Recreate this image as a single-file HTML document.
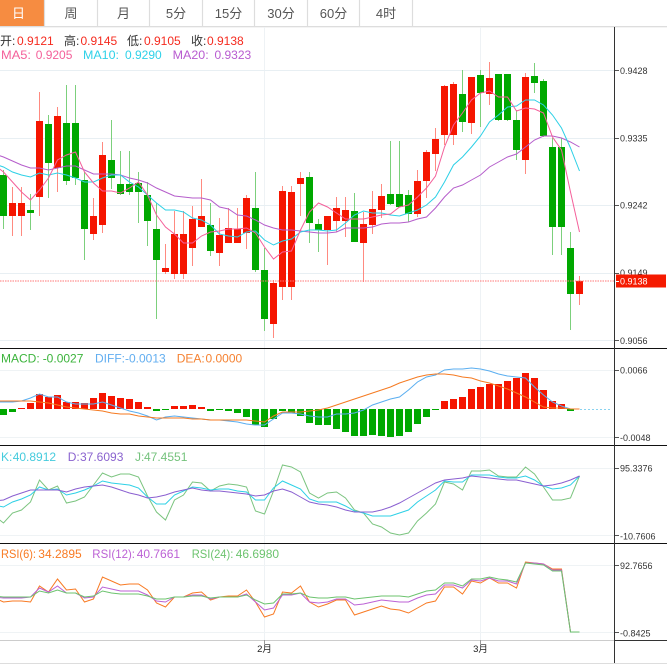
<!DOCTYPE html>
<html>
<head>
<meta charset="utf-8">
<style>
html,body{margin:0;padding:0;background:#fff;width:670px;height:667px;overflow:hidden}
svg{display:block;position:absolute;left:0;top:0;font-family:"Liberation Sans","Noto Sans CJK SC",sans-serif}
polyline{fill:none;stroke-width:1}
.ax{font-size:9px;fill:#333}
.lg{font-size:12px}
.tb{font-size:13px;fill:#555;text-anchor:middle}
</style>
</head>
<body>
<svg width="670" height="667" viewBox="0 0 670 667">
<!-- toolbar -->
<rect x="0" y="0" width="44" height="26" fill="#F68C41"/>
<path d="M44.5 0V26M97.5 0V26M149.5 0V26M202.5 0V26M254.5 0V26M307.5 0V26M359.5 0V26M412.5 0V26" stroke="#DDD" stroke-width="1.2" fill="none"/>
<rect x="0" y="26" width="667" height="1.3" fill="#DDD"/>
<text class="tb" x="18.5" y="18" style="fill:#fff">日</text>
<text class="tb" x="71" y="18">周</text>
<text class="tb" x="123.5" y="18">月</text>
<text class="tb" x="176" y="18">5分</text>
<text class="tb" x="228.5" y="18">15分</text>
<text class="tb" x="281" y="18">30分</text>
<text class="tb" x="333.5" y="18">60分</text>
<text class="tb" x="386" y="18">4时</text>

<!-- grid -->
<path d="M264.5 27V640M480.5 27V640" stroke="#EEF2F5" fill="none"/>
<path d="M0 70.5H614M0 138.5H614M0 205.5H614M0 273.5H614M0 340.5H614" stroke="#E8EFF3" fill="none"/>
<path d="M0 370.5H614M0 437.5H614M0 468.5H614M0 535.5H614M0 565.5H614M0 632.5H614" stroke="#EFF3F5" fill="none"/>

<!-- candle wicks -->
<path stroke="#FF8A80" fill="none" d="M12.5 187V236M21.5 187V236M39.5 92V216M57.5 107V192M93.5 198V240M102.5 142V233M165.5 244V274M174.5 211V279M183.5 211V279M192.5 206V266M201.5 179V227M219.5 218V266M228.5 208V243M237.5 208V243M246.5 195V249M273.5 280V338M282.5 186V300M291.5 186V300M300.5 172V216M327.5 216V265M336.5 197V232M345.5 197V237M363.5 212V282M372.5 191V234M381.5 184V218M417.5 170V217M426.5 150V198M435.5 128V171M444.5 85V145M453.5 82V145M471.5 77V134M489.5 62V105M525.5 73V174M579.5 276V305"/>
<path stroke="#7CD07C" fill="none" d="M3.5 170V229M30.5 194V230M48.5 115V198M66.5 85V185M75.5 85V185M84.5 172V260M111.5 120V189M120.5 151V195M129.5 151V195M138.5 172V223M147.5 182V246M156.5 203V319M210.5 203V256M255.5 172V272M264.5 248V331M309.5 172V243M318.5 219V252M354.5 193V242M390.5 141V205M399.5 141V207M408.5 190V222M462.5 70V132M480.5 70V127M498.5 74V121M507.5 74V121M516.5 110V160M534.5 63V93M543.5 79V137M552.5 138V255M561.5 138V255M570.5 232V330"/>
<!-- candle bodies -->
<path fill="#F51500" d="M9 203h7V216h-7zM18 203h7V216h-7zM36 121h7V197h-7zM54 116h7V168h-7zM90 216h7V234h-7zM99 155h7V225h-7zM162 268h7V272h-7zM171 234h7V274h-7zM180 234h7V274h-7zM189 219h7V248h-7zM198 216h7V227h-7zM216 235h7V253h-7zM225 228h7V243h-7zM234 229h7V243h-7zM243 198h7V233h-7zM270 283h7V324h-7zM279 191h7V287h-7zM288 192h7V287h-7zM297 178h7V184h-7zM324 216h7V230h-7zM333 208h7V221h-7zM342 210h7V221h-7zM360 224h7V243h-7zM369 209h7V225h-7zM378 196h7V210h-7zM414 181h7V214h-7zM423 152h7V181h-7zM432 139h7V154h-7zM441 86h7V135h-7zM450 84h7V135h-7zM468 77h7V123h-7zM486 78h7V94h-7zM522 77h7V160h-7zM576 281h7V294h-7z"/>
<path fill="#00A800" d="M0 175h7V216h-7zM27 210h7V213h-7zM45 124h7V163h-7zM63 123h7V181h-7zM72 123h7V178h-7zM81 180h7V229h-7zM108 160h7V178h-7zM117 184h7V194h-7zM126 184h7V192h-7zM135 183h7V192h-7zM144 195h7V221h-7zM153 229h7V260h-7zM207 225h7V251h-7zM252 208h7V270h-7zM261 270h7V319h-7zM306 177h7V223h-7zM315 224h7V230h-7zM351 211h7V242h-7zM387 194h7V204h-7zM396 194h7V207h-7zM405 195h7V214h-7zM459 94h7V122h-7zM477 75h7V93h-7zM495 74h7V120h-7zM504 74h7V120h-7zM513 120h7V150h-7zM531 76h7V83h-7zM540 81h7V136h-7zM549 147h7V227h-7zM558 147h7V227h-7zM567 248h7V294h-7z"/>

<!-- MA lines -->
<polyline stroke="#B55DCB" points="-5.5,154 3.5,157 12.5,161 21.5,165 30.5,168 39.5,168 48.5,170 57.5,168 66.5,166 75.5,166 84.5,170 93.5,174 102.5,174 111.5,174 120.5,175 129.5,178 138.5,180 147.5,183 156.5,188 165.5,192 174.5,196 183.5,197 192.5,198 201.5,198 210.5,200 219.5,207 228.5,209 237.5,215 246.5,216 255.5,220 264.5,225 273.5,228 282.5,230 291.5,230 300.5,231 309.5,232 318.5,233 327.5,233 336.5,232 345.5,228 354.5,228 363.5,228 372.5,227 381.5,224 390.5,223 399.5,223 408.5,222 417.5,219 426.5,217 435.5,208 444.5,197 453.5,188 462.5,185 471.5,180 480.5,175 489.5,167 498.5,162 507.5,157 516.5,154 525.5,147 534.5,140 543.5,136 552.5,136 561.5,138 570.5,142 579.5,147"/>
<polyline stroke="#2DD0E6" points="-5.5,164 3.5,167 12.5,172 21.5,175 30.5,177 39.5,173 48.5,175 57.5,173 66.5,175 75.5,178 84.5,182 93.5,182 102.5,178 111.5,175 120.5,175 129.5,182 138.5,187 147.5,195 156.5,203 165.5,210 174.5,210 183.5,212 192.5,218 201.5,220 210.5,225 219.5,234 228.5,236 237.5,237 246.5,232 255.5,231 264.5,240 273.5,245 282.5,241 291.5,239 300.5,232 309.5,230 318.5,230 327.5,231 336.5,230 345.5,223 354.5,215 363.5,211 372.5,213 381.5,213 390.5,215 399.5,216 408.5,213 417.5,210 426.5,205 435.5,197 444.5,182 453.5,165 462.5,157 471.5,147 480.5,136 489.5,122 498.5,115 507.5,107 516.5,106 525.5,100 534.5,100 543.5,105 552.5,115 561.5,128 570.5,148 579.5,171"/>
<polyline stroke="#F4609A" points="-5.5,165 3.5,172 12.5,182 21.5,192 30.5,200 39.5,190 48.5,178 57.5,160 66.5,155 75.5,152 84.5,172 93.5,183 102.5,191 111.5,191 120.5,193 129.5,188 138.5,182 147.5,195 156.5,215 165.5,227 174.5,234 183.5,243 192.5,243 201.5,236 210.5,232 219.5,231 228.5,229 237.5,229 246.5,228 255.5,233 264.5,247 273.5,259 282.5,252 291.5,251 300.5,230 309.5,212 318.5,203 327.5,207 336.5,213 345.5,219 354.5,219 363.5,219 372.5,217 381.5,215 390.5,214 399.5,207 408.5,205 417.5,197 426.5,188 435.5,176 444.5,147 453.5,125 462.5,113 471.5,100 480.5,93 489.5,91 498.5,97 507.5,97 516.5,111 525.5,108 534.5,109 543.5,113 552.5,137 561.5,150 570.5,192 579.5,232"/>

<!-- price line -->
<path d="M0 281H614" stroke="#F77" stroke-dasharray="1.5 1" fill="none"/>

<!-- MACD bars -->
<path fill="#F51500" d="M18 408h7V409h-7zM27 403h7V409h-7zM36 394h7V409h-7zM45 397h7V409h-7zM54 395h7V409h-7zM63 402h7V409h-7zM72 402h7V409h-7zM81 403h7V409h-7zM90 398h7V409h-7zM99 393h7V409h-7zM108 396h7V409h-7zM117 398h7V409h-7zM126 399h7V409h-7zM135 402h7V409h-7zM144 407h7V409h-7zM171 406h7V409h-7zM180 406h7V409h-7zM189 405h7V409h-7zM198 407h7V409h-7zM441 401h7V409h-7zM450 399h7V409h-7zM459 397h7V409h-7zM468 389h7V409h-7zM477 387h7V409h-7zM486 384h7V409h-7zM495 384h7V409h-7zM504 381h7V409h-7zM513 378h7V409h-7zM522 373h7V409h-7zM531 378h7V409h-7zM540 390h7V409h-7zM549 401h7V409h-7zM558 404h7V409h-7z"/>
<path fill="#00A800" d="M0 409h7V415h-7zM9 409h7V412h-7zM153 409h7V411h-7zM162 409h7V410h-7zM207 409h7V411h-7zM216 409h7V410h-7zM225 409h7V411h-7zM234 409h7V413h-7zM243 409h7V417h-7zM252 409h7V425h-7zM261 409h7V427h-7zM270 409h7V419h-7zM279 409h7V411h-7zM288 409h7V413h-7zM297 409h7V416h-7zM306 409h7V423h-7zM315 409h7V425h-7zM324 409h7V425h-7zM333 409h7V429h-7zM342 409h7V432h-7zM351 409h7V436h-7zM360 409h7V436h-7zM369 409h7V435h-7zM378 409h7V436h-7zM387 409h7V437h-7zM396 409h7V436h-7zM405 409h7V432h-7zM414 409h7V424h-7zM423 409h7V417h-7zM432 409h7V410h-7zM567 409h7V411h-7z"/>
<path d="M580 409.5H612" stroke="#8AD3F0" stroke-dasharray="2 2" fill="none"/>
<polyline stroke="#5AAEF0" points="-5.5,402 3.5,402 12.5,402 21.5,401 30.5,398 39.5,394 48.5,397 57.5,397 66.5,402 75.5,404 84.5,404 93.5,404 102.5,402 111.5,405 120.5,408 129.5,411 138.5,413 147.5,416 156.5,420 165.5,417 174.5,416 183.5,417 192.5,418 201.5,419 210.5,420 219.5,420 228.5,421 237.5,422 246.5,424 255.5,425 264.5,425 273.5,419 282.5,413 291.5,413 300.5,414 309.5,416 318.5,417 327.5,417 336.5,414 345.5,414 354.5,413 363.5,410 372.5,405 381.5,402 390.5,399 399.5,397 408.5,390 417.5,382 426.5,377 435.5,375 444.5,370 453.5,369 462.5,369 471.5,368 480.5,369 489.5,371 498.5,374 507.5,376 516.5,377 525.5,378 534.5,387 543.5,395 552.5,402 561.5,406 570.5,409 579.5,409"/>
<polyline stroke="#F57A21" points="-5.5,401 3.5,401 12.5,401 21.5,401 30.5,401 39.5,402 48.5,403 57.5,405 66.5,407 75.5,408 84.5,409 93.5,410 102.5,411 111.5,413 120.5,414 129.5,414 138.5,416 147.5,417 156.5,418 165.5,418 174.5,418 183.5,418 192.5,419 201.5,419 210.5,420 219.5,420 228.5,420 237.5,420 246.5,420 255.5,421 264.5,422 273.5,416 282.5,412 291.5,412 300.5,412 309.5,411 318.5,410 327.5,408 336.5,405 345.5,402 354.5,399 363.5,396 372.5,393 381.5,390 390.5,387 399.5,383 408.5,380 417.5,377 426.5,375 435.5,374 444.5,374 453.5,375 462.5,377 471.5,378 480.5,381 489.5,383 498.5,386 507.5,389 516.5,393 525.5,397 534.5,402 543.5,407 552.5,408 561.5,408 570.5,409 579.5,409"/>

<!-- KDJ -->
<polyline stroke="#7BC47F" points="-5.5,516 3.5,523 12.5,513 21.5,510 30.5,502 39.5,480 48.5,490 57.5,486 66.5,503 75.5,501 84.5,497 93.5,485 102.5,473 111.5,477 120.5,474 129.5,474 138.5,477 147.5,496 156.5,512 165.5,520 174.5,500 183.5,495 192.5,482 201.5,483 210.5,491 219.5,486 228.5,484 237.5,485 246.5,487 255.5,511 264.5,514 273.5,491 282.5,465 291.5,467 300.5,472 309.5,493 318.5,498 327.5,493 336.5,492 345.5,498 354.5,510 363.5,513 372.5,524 381.5,527 390.5,533 399.5,535 408.5,533 417.5,521 426.5,513 435.5,504 444.5,482 453.5,484 462.5,490 471.5,471 480.5,471 489.5,470 498.5,476 507.5,477 516.5,477 525.5,467 534.5,474 543.5,487 552.5,500 561.5,500 570.5,498 579.5,476"/>
<polyline stroke="#2DD0E6" points="-5.5,505 3.5,507 12.5,502 21.5,499 30.5,495 39.5,487 48.5,490 57.5,489 66.5,495 75.5,493 84.5,490 93.5,486 102.5,481 111.5,483 120.5,484 129.5,485 138.5,488 147.5,497 156.5,504 165.5,504 174.5,495 183.5,491 192.5,487 201.5,488 210.5,490 219.5,489 228.5,489 237.5,491 246.5,492 255.5,500 264.5,500 273.5,488 282.5,481 291.5,485 300.5,489 309.5,499 318.5,502 327.5,502 336.5,502 345.5,506 354.5,511 363.5,513 372.5,516 381.5,516 390.5,516 399.5,513 408.5,510 417.5,502 426.5,496 435.5,490 444.5,481 453.5,482 462.5,482 471.5,475 480.5,475 489.5,475 498.5,477 507.5,478 516.5,478 525.5,476 534.5,480 543.5,486 552.5,489 561.5,488 570.5,485 579.5,476"/>
<polyline stroke="#8A5FD0" points="-5.5,501 3.5,500 12.5,496 21.5,493 30.5,490 39.5,490 48.5,490 57.5,490 66.5,492 75.5,489 84.5,487 93.5,486 102.5,485 111.5,487 120.5,490 129.5,493 138.5,495 147.5,498 156.5,497 165.5,495 174.5,492 183.5,490 192.5,488 201.5,490 210.5,491 219.5,491 228.5,492 237.5,493 246.5,494 255.5,496 264.5,495 273.5,491 282.5,489 291.5,492 300.5,497 309.5,502 318.5,504 327.5,505 336.5,507 345.5,510 354.5,512 363.5,512 372.5,512 381.5,510 390.5,507 399.5,503 408.5,498 417.5,493 426.5,488 435.5,483 444.5,480 453.5,479 462.5,478 471.5,476 480.5,477 489.5,478 498.5,479 507.5,480 516.5,480 525.5,482 534.5,484 543.5,486 552.5,485 561.5,483 570.5,480 579.5,476"/>

<!-- RSI -->
<polyline stroke="#F87A23" points="-5.5,598 3.5,602 12.5,601 21.5,601 30.5,602 39.5,586 48.5,592 57.5,579 66.5,590 75.5,589 84.5,602 93.5,599 102.5,577 111.5,581 120.5,585 129.5,584 138.5,584 147.5,590 156.5,603 165.5,607 174.5,597 183.5,597 192.5,593 201.5,592 210.5,600 219.5,597 228.5,596 237.5,596 246.5,590 255.5,602 264.5,617 273.5,614 282.5,592 291.5,593 300.5,586 309.5,602 318.5,607 327.5,604 336.5,600 345.5,600 354.5,615 363.5,612 372.5,609 381.5,606 390.5,609 399.5,610 408.5,613 417.5,608 426.5,603 435.5,601 444.5,587 453.5,587 462.5,594 471.5,581 480.5,583 489.5,578 498.5,583 507.5,583 516.5,588 525.5,562 534.5,563 543.5,564 552.5,569 561.5,569 570.5,632 579.5,632"/>
<polyline stroke="#BC62D5" points="-5.5,597 3.5,598 12.5,598 21.5,598 30.5,597 39.5,588 48.5,592 57.5,586 66.5,593 75.5,593 84.5,598 93.5,597 102.5,587 111.5,589 120.5,591 129.5,591 138.5,591 147.5,595 156.5,601 165.5,602 174.5,597 183.5,597 192.5,595 201.5,595 210.5,599 219.5,597 228.5,597 237.5,597 246.5,594 255.5,602 264.5,610 273.5,608 282.5,595 291.5,595 300.5,593 309.5,602 318.5,603 327.5,602 336.5,599 345.5,599 354.5,605 363.5,604 372.5,602 381.5,600 390.5,601 399.5,602 408.5,602 417.5,598 426.5,595 435.5,594 444.5,585 453.5,585 462.5,588 471.5,580 480.5,581 489.5,578 498.5,581 507.5,581 516.5,584 525.5,563 534.5,563 543.5,564 552.5,570 561.5,570 570.5,632 579.5,632"/>
<polyline stroke="#6CC36E" points="-5.5,596 3.5,597 12.5,597 21.5,597 30.5,597 39.5,591 48.5,593 57.5,590 66.5,593 75.5,593 84.5,597 93.5,596 102.5,591 111.5,593 120.5,594 129.5,594 138.5,594 147.5,596 156.5,599 165.5,599 174.5,597 183.5,597 192.5,596 201.5,596 210.5,598 219.5,597 228.5,597 237.5,597 246.5,595 255.5,600 264.5,604 273.5,603 282.5,594 291.5,594 300.5,593 309.5,597 318.5,598 327.5,598 336.5,597 345.5,597 354.5,599 363.5,598 372.5,597 381.5,596 390.5,596 399.5,596 408.5,597 417.5,594 426.5,591 435.5,590 444.5,583 453.5,583 462.5,586 471.5,579 480.5,579 489.5,577 498.5,579 507.5,580 516.5,582 525.5,563 534.5,564 543.5,565 552.5,571 561.5,571 570.5,632 579.5,632"/>

<!-- panel separators -->
<path d="M0 348.5H667M0 445.5H667M0 543.5H667" stroke="#111" fill="none"/>
<path d="M0 640.5H614" stroke="#CCC" fill="none"/>
<path d="M614 640.5H667" stroke="#333" fill="none"/>
<path d="M0 663.5H667" stroke="#DDD" fill="none"/>
<path d="M614.5 27V663" stroke="#333" fill="none"/>
<path d="M264.5 640V644M480.5 640V644" stroke="#999" fill="none"/>

<!-- axis ticks -->
<path d="M615 70.5H619M615 138.5H619M615 205.5H619M615 273.5H619M615 340.5H619M615 370.5H619M615 437.5H619M615 468.5H619M615 535.5H619M615 565.5H619M615 632.5H619" stroke="#555" fill="none"/>

<!-- axis labels -->
<text class="ax" x="620" y="74">0.9428</text>
<text class="ax" x="620" y="141.500">0.9335</text>
<text class="ax" x="620" y="208.500">0.9242</text>
<text class="ax" x="620" y="276">0.9149</text>
<text class="ax" x="620" y="344">0.9056</text>
<text class="ax" x="620" y="373.500">0.0066</text>
<text class="ax" x="620" y="441">-0.0048</text>
<text class="ax" x="620" y="471.500">95.3376</text>
<text class="ax" x="620" y="539.500">-10.7606</text>
<text class="ax" x="620" y="569">92.7656</text>
<text class="ax" x="620" y="636.500">-0.8425</text>

<!-- price tag -->
<rect x="616" y="274.500" width="50" height="13" fill="#F51A00"/>
<path d="M616 281.500H619" stroke="#fff" fill="none"/>
<text x="620" y="284.500" style="font-size:9px;fill:#fff">0.9138</text>

<!-- time labels -->
<text x="264.500" y="652" style="font-size:9.500px;fill:#222;text-anchor:middle">2月</text>
<text x="480.500" y="652" style="font-size:9.500px;fill:#222;text-anchor:middle">3月</text>

<!-- legends -->
<text class="lg" x="0" y="45" fill="#333">开:</text><text class="lg" x="17" y="45" fill="#F52A1E">0.9121</text>
<text class="lg" x="64" y="45" fill="#333">高:</text><text class="lg" x="80.500" y="45" fill="#F52A1E">0.9145</text>
<text class="lg" x="127" y="45" fill="#333">低:</text><text class="lg" x="144" y="45" fill="#F52A1E">0.9105</text>
<text class="lg" x="191" y="45" fill="#333">收:</text><text class="lg" x="207" y="45" fill="#F52A1E">0.9138</text>

<text class="lg" x="1" y="59" fill="#F4609A" textLength="30" lengthAdjust="spacingAndGlyphs">MA5:</text><text class="lg" x="35.700" y="59" fill="#F4609A">0.9205</text>
<text class="lg" x="83" y="59" fill="#2FD1E8" textLength="36" lengthAdjust="spacingAndGlyphs">MA10:</text><text class="lg" x="125" y="59" fill="#2FD1E8">0.9290</text>
<text class="lg" x="172.700" y="59" fill="#B85BD0" textLength="36" lengthAdjust="spacingAndGlyphs">MA20:</text><text class="lg" x="214.500" y="59" fill="#B85BD0">0.9323</text>

<text class="lg" x="1" y="362.500" fill="#3CB43C">MACD:</text><text class="lg" x="42.700" y="362.500" fill="#3CB43C">-0.0027</text>
<text class="lg" x="95" y="362.500" fill="#62AEF0">DIFF:</text><text class="lg" x="125" y="362.500" fill="#62AEF0">-0.0013</text>
<text class="lg" x="176.700" y="362.500" fill="#F58232">DEA:</text><text class="lg" x="205.500" y="362.500" fill="#F58232">0.0000</text>

<text class="lg" x="1" y="461" fill="#45CBDD">K:</text><text class="lg" x="12.700" y="461" fill="#45CBDD">40.8912</text>
<text class="lg" x="67.700" y="461" fill="#8A63CF">D:</text><text class="lg" x="80" y="461" fill="#8A63CF">37.6093</text>
<text class="lg" x="135" y="461" fill="#74C27C">J:</text><text class="lg" x="144" y="461" fill="#74C27C">47.4551</text>

<text class="lg" x="1" y="558" fill="#F87A23" textLength="35" lengthAdjust="spacingAndGlyphs">RSI(6):</text><text class="lg" x="38.300" y="558" fill="#F87A23">34.2895</text>
<text class="lg" x="92.300" y="558" fill="#BC62D5" textLength="42.700" lengthAdjust="spacingAndGlyphs">RSI(12):</text><text class="lg" x="136.700" y="558" fill="#BC62D5">40.7661</text>
<text class="lg" x="191.700" y="558" fill="#6CC36E" textLength="41.700" lengthAdjust="spacingAndGlyphs">RSI(24):</text><text class="lg" x="235.700" y="558" fill="#6CC36E">46.6980</text>
</svg>
</body>
</html>
